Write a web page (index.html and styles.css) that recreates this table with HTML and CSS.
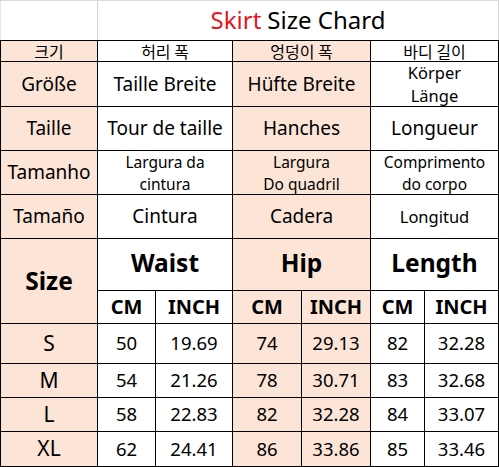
FILE: index.html
```html
<!DOCTYPE html>
<html>
<head>
<meta charset="utf-8">
<link rel="stylesheet" href="styles.css">
</head>
<body>
<div class="chart">
  <div class="title-row">
    <div class="title-blank"></div>
    <div class="title"><span class="red">Skirt</span> Size Chard</div>
  </div>
  <div class="grid">
    <div class="c pe ko">크기</div>
    <div class="c w ko span2">허리 폭</div>
    <div class="c pe ko span2">엉덩이 폭</div>
    <div class="c w ko span2">바디 길이</div>

    <div class="c pe t17">Größe</div>
    <div class="c w t17 span2">Taille Breite</div>
    <div class="c pe t17 span2">Hüfte Breite</div>
    <div class="c w t15 span2">Körper<br>Länge</div>

    <div class="c pe t17">Taille</div>
    <div class="c w t17 span2">Tour de taille</div>
    <div class="c pe t17 span2">Hanches</div>
    <div class="c w t17 span2">Longueur</div>

    <div class="c pe t17">Tamanho</div>
    <div class="c w t14 span2">Largura da<br>cintura</div>
    <div class="c pe t14 span2">Largura<br>Do quadril</div>
    <div class="c w t14 span2">Comprimento<br>do corpo</div>

    <div class="c pe t17">Tamaño</div>
    <div class="c w t17 span2">Cintura</div>
    <div class="c pe t17 span2">Cadera</div>
    <div class="c w t16 span2">Longitud</div>

    <div class="c pe big size">Size</div>
    <div class="c w big span2">Waist</div>
    <div class="c pe big span2">Hip</div>
    <div class="c w big span2">Length</div>

    <div class="c w unit">CM</div>
    <div class="c w unit">INCH</div>
    <div class="c pe unit">CM</div>
    <div class="c pe unit">INCH</div>
    <div class="c w unit">CM</div>
    <div class="c w unit">INCH</div>

    <div class="c pe sz">S</div>
    <div class="c w num">50</div><div class="c w num">19.69</div>
    <div class="c pe num">74</div><div class="c pe num">29.13</div>
    <div class="c w num">82</div><div class="c w num">32.28</div>

    <div class="c pe sz">M</div>
    <div class="c w num">54</div><div class="c w num">21.26</div>
    <div class="c pe num">78</div><div class="c pe num">30.71</div>
    <div class="c w num">83</div><div class="c w num">32.68</div>

    <div class="c pe sz">L</div>
    <div class="c w num">58</div><div class="c w num">22.83</div>
    <div class="c pe num">82</div><div class="c pe num">32.28</div>
    <div class="c w num">84</div><div class="c w num">33.07</div>

    <div class="c pe sz">XL</div>
    <div class="c w num">62</div><div class="c w num">24.41</div>
    <div class="c pe num">86</div><div class="c pe num">33.86</div>
    <div class="c w num">85</div><div class="c w num">33.46</div>
  </div>
</div>
</body>
</html>
```
FILE: styles.css
```css
html, body {
  margin: 0;
  padding: 0;
  background: #ffffff;
}
body {
  font-family: "Noto Sans", "Noto Sans CJK KR", sans-serif;
  color: #000;
}
.chart {
  width: 499px;
}
.title-row {
  display: flex;
  height: 39px;
  border-top: 1px solid #dcdcdc;
}
.title-blank {
  width: 96px;
  border-left: 1px solid #e6e6e6;
  border-right: 1px solid #d4d4d4;
  background: #fff;
}
.title {
  flex: 1;
  border-right: 1px solid #d4d4d4;
  display: flex;
  align-items: center;
  justify-content: center;
  font-size: 24px;
  color: #000;
  padding-bottom: 2px;
}
.red {
  color: #e8131b;
  margin-right: 6px;
}
.grid {
  display: grid;
  grid-template-columns: 96px 57px 76px 68px 68px 53px 73px;
  grid-template-rows: 20px 44px 43px 43px 43px 51px 32px 39px 33px 33px 34px;
  gap: 1px;
  padding: 1px;
  background: #000;
}
.c {
  display: flex;
  align-items: center;
  justify-content: center;
  text-align: center;
  line-height: 1.3;
  white-space: nowrap;
}
.pe { background: #fce4d6; }
.w { background: #ffffff; }
.span2 { grid-column: span 2; }
.ko { font-size: 16px; line-height: 20px; font-family: "Noto Sans CJK KR", sans-serif; }
.t17 { font-size: 19px; }
.t16 { font-size: 16.5px; }
.t15 { font-size: 16.5px; line-height: 23px; }
.t14 { font-size: 15.5px; line-height: 22px; }
.big { font-size: 24.5px; font-weight: 700; padding-bottom: 4px; }
.size { grid-row: span 2; padding-bottom: 0; }
.unit { font-size: 20px; font-weight: 700; }
.num { font-size: 18.5px; }
.sz { font-size: 21px; }
```
